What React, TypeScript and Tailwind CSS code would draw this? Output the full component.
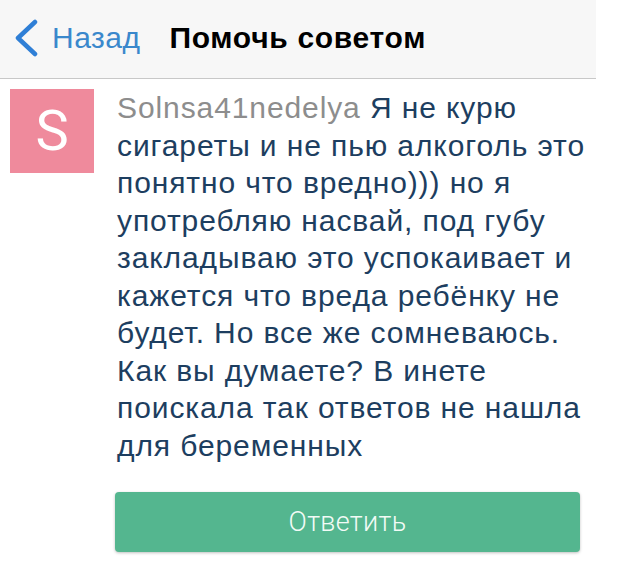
import React from "react";

const lines = [
  "сигареты и не пью алкоголь это",
  "понятно что вредно))) но я",
  "употребляю насвай, под губу",
  "закладываю это успокаивает и",
  "кажется что вреда ребёнку не",
  "будет. Но все же сомневаюсь.",
  "Как вы думаете? В инете",
  "поискала так ответов не нашла",
  "для беременных",
];

const App: React.FC = () => {
  return (
    <div
      className="w-[620px] h-[567px] bg-white overflow-hidden"
      style={{ fontFamily: '"Liberation Sans", Arial, sans-serif' }}
    >
      {/* nav bar */}
      <div className="w-[596px] h-[79px] bg-[#f7f7f7] border-b border-[#c8c8c8] flex items-center">
        <svg width="26" height="38" viewBox="0 0 26 38" className="ml-[13px] mt-[-2px]">
          <path
            d="M22 3 L5 19 L22 35"
            fill="none"
            stroke="#2f7fd6"
            strokeWidth="4.5"
            strokeLinecap="round"
            strokeLinejoin="round"
          />
        </svg>
        <span className="ml-[13px] mt-[-4px] text-[30px] tracking-[0.5px] text-[#3a88cc]">Назад</span>
        <span className="ml-[29px] mt-[-4px] text-[30px] tracking-[0.7px] font-bold text-black">
          Помочь советом
        </span>
      </div>

      {/* post */}
      <div className="flex pt-[10px]">
        <div
          className="ml-[10px] w-[84px] h-[84px] shrink-0 bg-[#ef8a9c] flex items-center justify-center text-white text-[56px] leading-none"
          style={{ fontFamily: "Roboto, sans-serif" }}
        >
          S
        </div>
        <div className="ml-[23px] text-[30px] tracking-[0.9px] leading-[37.5px] text-[#1d3e60] whitespace-nowrap">
          <div>
            <span className="text-[#8d8d8d]">Solnsa41nedelya</span> Я не курю
          </div>
          {lines.map((l) => (
            <div key={l}>{l}</div>
          ))}
        </div>
      </div>

      <div className="flex pt-[28px]">
        <button
          className="ml-[115px] w-[465px] h-[60px] rounded-[4px] bg-[#54b68f] shadow-[0_1px_3px_rgba(0,0,0,0.25)] text-[27px] font-light tracking-[0.3px] text-[#f2fbf6]"
          style={{ fontFamily: "Roboto, sans-serif" }}
        >
          Ответить
        </button>
      </div>
    </div>
  );
};

export default App;
